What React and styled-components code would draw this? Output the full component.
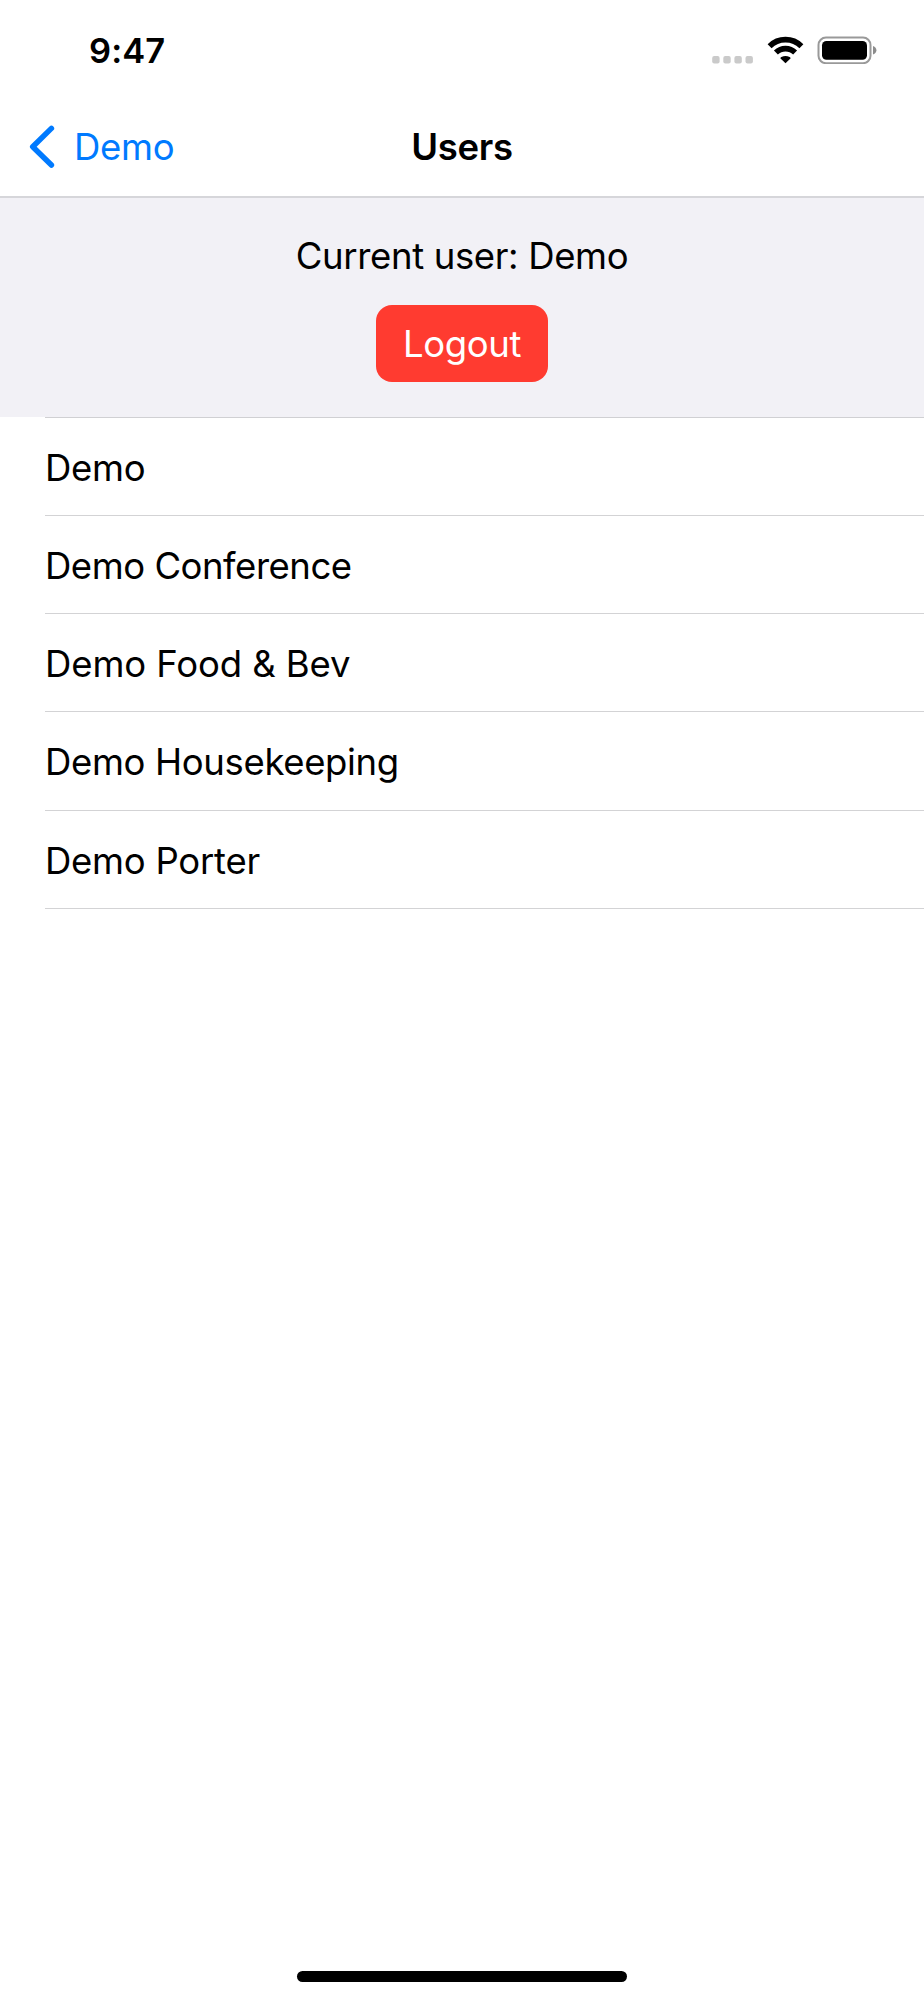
import React from 'react';
import styled, { createGlobalStyle } from 'styled-components';

const GlobalStyle = createGlobalStyle`
  * { box-sizing: border-box; }
  body { margin: 0; background: #fff; }
`;

const Screen = styled.div`
  display: flex;
  flex-direction: column;
  width: 924px;
  height: 2000px;
  background: #fff;
  color: #000;
  font-family: Inter, 'Liberation Sans', sans-serif;
  font-size: 36.5px;
  line-height: 44px;
  white-space: nowrap;
`;

const StatusBar = styled.div`
  display: flex;
  justify-content: space-between;
  align-items: flex-start;
  height: 96px;
  padding: 29px 47px 0 89px;
`;

const Time = styled.div`
  font-size: 34.5px;
  font-weight: 600;
  letter-spacing: 0.1px;
`;

const StatusIcons = styled.div`
  display: flex;
  padding-top: 7px;
`;

const SignalIcon = styled.svg`
  width: 42px;
  height: 28px;
  margin-right: 13px;
`;

const WifiIcon = styled.svg`
  width: 37px;
  height: 28px;
  margin-right: 13px;
`;

const BatteryIcon = styled.svg`
  width: 60px;
  height: 28px;
`;

const NavBar = styled.nav`
  display: grid;
  grid-template-columns: 1fr auto 1fr;
  align-items: center;
  height: 102px;
  padding: 2px 29px 0;
  border-bottom: 2px solid #d6d6da;
`;

const BackButton = styled.button`
  display: flex;
  align-items: center;
  gap: 18px;
  padding: 0;
  border: 0;
  background: none;
  color: #007aff;
  font: inherit;
  letter-spacing: -0.3px;
`;

const Chevron = styled.svg`
  width: 27px;
  height: 44px;
`;

const Title = styled.h1`
  margin: 0;
  font-size: 36.5px;
  font-weight: 600;
  letter-spacing: -0.3px;
`;

const UserPanel = styled.section`
  display: flex;
  flex-direction: column;
  align-items: center;
  height: 219px;
  padding-top: 36px;
  background: #f2f1f6;
`;

const CurrentUser = styled.p`
  margin: 0 0 27px;
  letter-spacing: -0.35px;
`;

const LogoutButton = styled.button`
  width: 172px;
  height: 77px;
  padding: 0;
  border: 0;
  border-radius: 16px;
  background: #ff3b30;
  color: #fff;
  font: inherit;
  letter-spacing: -0.4px;
`;

const UserList = styled.ul`
  margin: 0 0 0 45px;
  padding: 0;
  list-style: none;
  border-top: 1px solid #d0d0d3;
`;

const UserRow = styled.li`
  display: flex;
  align-items: center;
  height: 98.15px;
  padding-top: 3px;
  border-bottom: 1px solid #d3d3d5;
  letter-spacing: ${({ $spacing }) => $spacing}px;
`;

const HomeIndicator = styled.div`
  width: 330px;
  height: 11px;
  margin: auto auto 18px;
  border-radius: 6px;
  background: #000;
`;

const users = [
  { name: 'Demo', spacing: -0.25 },
  { name: 'Demo Conference', spacing: -0.47 },
  { name: 'Demo Food & Bev', spacing: -0.1 },
  { name: 'Demo Housekeeping', spacing: -0.35 },
  { name: 'Demo Porter', spacing: -0.25 },
];

export default function App() {
  return (
    <>
      <GlobalStyle />
      <Screen>
        <StatusBar>
          <Time>9:47</Time>
          <StatusIcons>
            <SignalIcon viewBox="0 0 42 28" fill="#cacaca">
              {[0, 11.1, 22.2, 33.3].map((x) => (
                <rect key={x} x={x + 0.2} y="20" width="7.4" height="7.4" rx="2" />
              ))}
            </SignalIcon>
            <WifiIcon viewBox="0 0 37 28">
              <g fill="none" stroke="#000" strokeWidth="5.6">
                <path d="M2.6 10.2A22.6 22.6 0 0 1 34.4 10.2" />
                <path d="M8.9 16.6A13.7 13.7 0 0 1 28.1 16.6" />
              </g>
              <path d="M18.5 27.3L13.3 22.2Q13.6 21.6 14.4 21.1Q18.5 18.7 22.6 21.1Q23.4 21.6 23.7 22.2Z" />
            </WifiIcon>
            <BatteryIcon viewBox="0 0 60 28">
              <rect x="1.5" y="1.5" width="52" height="25.7" rx="7.5" fill="none" stroke="#999" strokeWidth="2" />
              <rect x="5" y="5" width="45" height="18.8" rx="4.5" />
              <path d="M56 10V18.6Q59.4 17.2 59.4 14.3Q59.4 11.4 56 10Z" fill="#8c8c8c" />
            </BatteryIcon>
          </StatusIcons>
        </StatusBar>
        <NavBar>
          <BackButton>
            <Chevron viewBox="0 0 27 44" fill="none" stroke="#007aff" strokeWidth="5.5" strokeLinecap="round" strokeLinejoin="round">
              <path d="M22.4 3.4L3.7 21.7L22.4 40" />
            </Chevron>
            Demo
          </BackButton>
          <Title>Users</Title>
        </NavBar>
        <UserPanel>
          <CurrentUser>Current user: Demo</CurrentUser>
          <LogoutButton>Logout</LogoutButton>
        </UserPanel>
        <UserList>
          {users.map(({ name, spacing }) => (
            <UserRow key={name} $spacing={spacing}>{name}</UserRow>
          ))}
        </UserList>
        <HomeIndicator />
      </Screen>
    </>
  );
}
